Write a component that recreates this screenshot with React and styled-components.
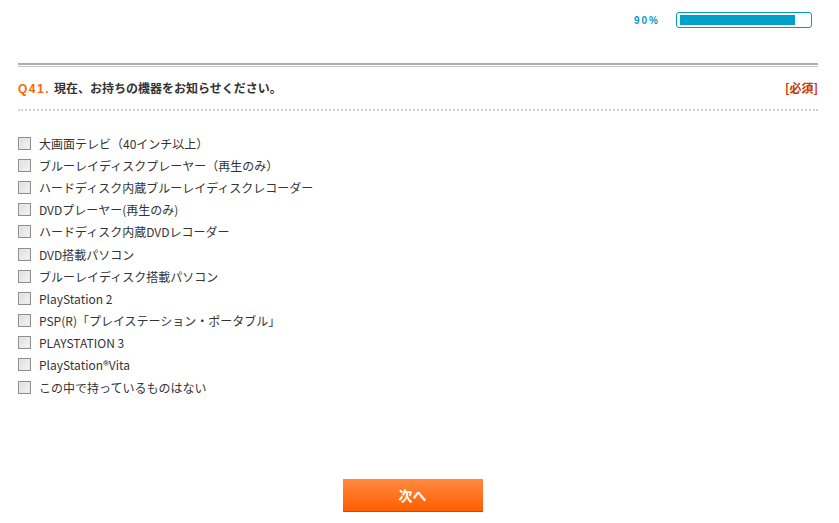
import React, { useState } from 'react';
import styled, { createGlobalStyle } from 'styled-components';

const GlobalStyle = createGlobalStyle`
  body {
    margin: 0;
    background: #fff;
    font-family: "MS UI Gothic", "Noto Sans CJK JP", "Liberation Sans", sans-serif;
    color: #333;
  }
`;

const options = [
  '大画面テレビ（40インチ以上）',
  'ブルーレイディスクプレーヤー（再生のみ）',
  'ハードディスク内蔵ブルーレイディスクレコーダー',
  'DVDプレーヤー(再生のみ)',
  'ハードディスク内蔵DVDレコーダー',
  'DVD搭載パソコン',
  'ブルーレイディスク搭載パソコン',
  'PlayStation 2',
  'PSP(R)「プレイステーション・ポータブル」',
  'PLAYSTATION 3',
  'PlayStation®Vita',
  'この中で持っているものはない'
];

const App = () => {
  const [checked, setChecked] = useState({});
  const progress = 90;

  const toggle = index => {
    setChecked(prev => ({ ...prev, [index]: !prev[index] }));
  };

  return (
    <Page>
      <GlobalStyle />
      <ProgressRow>
        <ProgressLabel>{progress}%</ProgressLabel>
        <ProgressTrack>
          <ProgressFill style={{ width: `${progress}%` }} />
        </ProgressTrack>
      </ProgressRow>
      <QuestionHeader>
        <QuestionTitle>
          <QuestionNumber>Q41.</QuestionNumber>
          現在、お持ちの機器をお知らせください。
        </QuestionTitle>
        <Required>[必須]</Required>
      </QuestionHeader>
      <OptionList>
        {options.map((label, index) => (
          <Option key={label}>
            <Box
              type="checkbox"
              checked={!!checked[index]}
              onChange={() => toggle(index)}
            />
            <span>{label}</span>
          </Option>
        ))}
      </OptionList>
      <Footer>
        <NextButton>次へ</NextButton>
      </Footer>
    </Page>
  );
};

export default App;

const Page = styled.div`
  width: 800px;
  margin-left: 18px;
`;

const ProgressRow = styled.div`
  display: flex;
  justify-content: flex-end;
  align-items: center;
  gap: 16px;
  height: 16px;
  padding-top: 12px;
  padding-right: 6px;
`;

const ProgressLabel = styled.span`
  font-family: "Liberation Sans", Arial, sans-serif;
  font-size: 10px;
  font-weight: bold;
  letter-spacing: 2px;
  color: #0099cc;
`;

const ProgressTrack = styled.div`
  box-sizing: border-box;
  width: 136px;
  height: 16px;
  padding: 2px 3px;
  border: 1px solid #0099cc;
  border-radius: 3px;
  background: #fff;
`;

const ProgressFill = styled.div`
  height: 100%;
  background: #00a0c8;
`;

const QuestionHeader = styled.div`
  display: flex;
  justify-content: space-between;
  align-items: center;
  margin-top: 35px;
  height: 44px;
  border-top: 2px solid #acacac;
  position: relative;
  border-bottom: 2px dotted #cfcfcf;

  &::before {
    content: '';
    position: absolute;
    left: 0;
    right: 0;
    top: 1px;
    border-top: 1px solid #c4c4c4;
  }
`;

const QuestionTitle = styled.div`
  font-size: 12px;
  font-weight: bold;
  color: #333;
`;

const QuestionNumber = styled.span`
  font-family: "Liberation Sans", Arial, sans-serif;
  color: #ff6600;
  letter-spacing: 1.5px;
  margin-right: 4px;
`;

const Required = styled.span`
  font-size: 12px;
  font-weight: bold;
  color: #cc3300;
`;

const OptionList = styled.ul`
  list-style: none;
  margin: 0;
  padding: 21px 0 0;
`;

const Option = styled.li`
  display: flex;
  align-items: center;
  gap: 8px;
  height: 22.2px;
  font-size: 12px;
  color: #333;
`;

const Box = styled.input`
  appearance: none;
  box-sizing: border-box;
  width: 13px;
  height: 13px;
  margin: 0;
  border: 1px solid #8f8f8f;
  background: linear-gradient(135deg, #dcdcdc 0%, #f6f6f6 100%);
  box-shadow: inset 0 0 0 1px #e8e8e8;
  cursor: pointer;

  &:checked {
    background: #fff
      url("data:image/svg+xml,%3Csvg xmlns='http://www.w3.org/2000/svg' viewBox='0 0 11 11'%3E%3Cpath d='M2 5.5l2.5 2.5L9 3' fill='none' stroke='%23333' stroke-width='1.6'/%3E%3C/svg%3E")
      center / 11px no-repeat;
  }
`;

const Footer = styled.div`
  display: flex;
  justify-content: center;
  padding-top: 81px;
  padding-right: 11px;
`;

const NextButton = styled.button`
  width: 140px;
  height: 33px;
  border: none;
  border-bottom: 1px solid #cc4a00;
  background: linear-gradient(to bottom, #ff8a40 0%, #ff5e00 100%);
  color: #fff;
  font-family: "Noto Sans CJK JP", sans-serif;
  font-size: 14px;
  font-weight: bold;
  cursor: pointer;
`;
